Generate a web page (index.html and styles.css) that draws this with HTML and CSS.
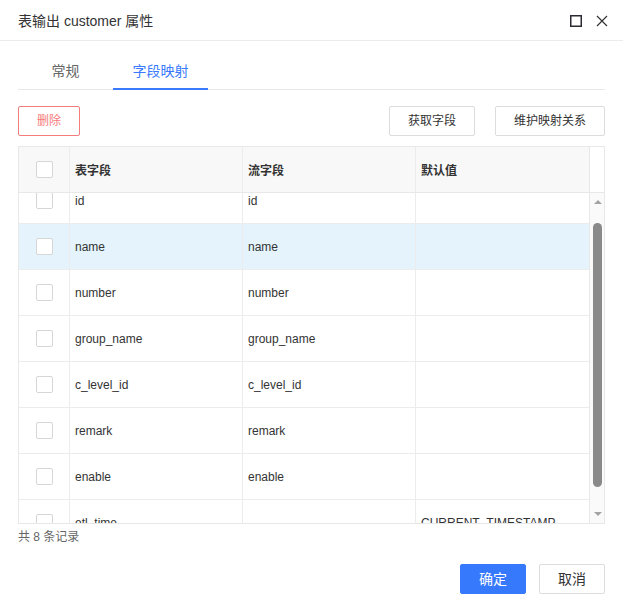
FILE: index.html
```html
<!DOCTYPE html>
<html lang="zh-CN">
<head>
<meta charset="utf-8">
<title>表输出 customer 属性</title>
<link rel="stylesheet" href="styles.css">
</head>
<body>
<div class="dialog">
  <div class="dlg-head">
    <div class="dlg-title">表输出 customer 属性</div>
    <div class="dlg-tools">
      <svg class="tool" width="12" height="12" viewBox="0 0 12 12"><rect x="0.75" y="0.75" width="10.5" height="10.5" fill="none" stroke="#2b2b33" stroke-width="1.5"/></svg>
      <svg class="tool" width="12" height="12" viewBox="0 0 12 12"><path d="M1 1 L11 11 M11 1 L1 11" stroke="#333" stroke-width="1.2" fill="none"/></svg>
    </div>
  </div>

  <div class="tabs">
    <div class="tab">常规</div>
    <div class="tab active">字段映射</div>
  </div>

  <div class="toolbar">
    <button class="btn btn-danger">删除</button>
    <div class="toolbar-right">
      <button class="btn">获取字段</button>
      <button class="btn">维护映射关系</button>
    </div>
  </div>

  <div class="table">
    <div class="thead">
      <div class="cell c-check"><span class="checkbox"></span></div>
      <div class="cell c-col">表字段</div>
      <div class="cell c-col">流字段</div>
      <div class="cell c-col last">默认值</div>
      <div class="gutter-head"></div>
    </div>
    <div class="tbody">
      <div class="viewport">
        <div class="rows">
          <div class="row">
            <div class="cell c-check"><span class="checkbox"></span></div>
            <div class="cell c-col">id</div>
            <div class="cell c-col">id</div>
            <div class="cell c-col last"></div>
          </div>
          <div class="row selected">
            <div class="cell c-check"><span class="checkbox"></span></div>
            <div class="cell c-col">name</div>
            <div class="cell c-col">name</div>
            <div class="cell c-col last"></div>
          </div>
          <div class="row">
            <div class="cell c-check"><span class="checkbox"></span></div>
            <div class="cell c-col">number</div>
            <div class="cell c-col">number</div>
            <div class="cell c-col last"></div>
          </div>
          <div class="row">
            <div class="cell c-check"><span class="checkbox"></span></div>
            <div class="cell c-col">group_name</div>
            <div class="cell c-col">group_name</div>
            <div class="cell c-col last"></div>
          </div>
          <div class="row">
            <div class="cell c-check"><span class="checkbox"></span></div>
            <div class="cell c-col">c_level_id</div>
            <div class="cell c-col">c_level_id</div>
            <div class="cell c-col last"></div>
          </div>
          <div class="row">
            <div class="cell c-check"><span class="checkbox"></span></div>
            <div class="cell c-col">remark</div>
            <div class="cell c-col">remark</div>
            <div class="cell c-col last"></div>
          </div>
          <div class="row">
            <div class="cell c-check"><span class="checkbox"></span></div>
            <div class="cell c-col">enable</div>
            <div class="cell c-col">enable</div>
            <div class="cell c-col last"></div>
          </div>
          <div class="row">
            <div class="cell c-check"><span class="checkbox"></span></div>
            <div class="cell c-col">etl_time</div>
            <div class="cell c-col"></div>
            <div class="cell c-col last">CURRENT_TIMESTAMP</div>
          </div>
        </div>
      </div>
      <div class="scrollbar">
        <div class="sb-btn"><span class="arrow-up"></span></div>
        <div class="sb-track"><div class="sb-thumb"></div></div>
        <div class="sb-btn"><span class="arrow-down"></span></div>
      </div>
    </div>
  </div>

  <div class="total">共 8 条记录</div>

  <div class="actions">
    <button class="btn btn-lg btn-primary">确定</button>
    <button class="btn btn-lg">取消</button>
  </div>
</div>
</body>
</html>
```

FILE: styles.css
```css
* { box-sizing: border-box; margin: 0; padding: 0; }

body {
  width: 623px;
  height: 600px;
  overflow: hidden;
  background: #fff;
  color: #333;
  font-family: "Liberation Sans", "Noto Sans CJK SC", Arial, sans-serif;
  font-size: 12px;
}

.dialog {
  display: flex;
  flex-direction: column;
  height: 600px;
}

.dlg-head {
  height: 41px;
  border-bottom: 1px solid #ececec;
  display: flex;
  align-items: center;
  justify-content: space-between;
  padding: 0 15px 0 18px;
}

.dlg-title {
  font-size: 14px;
  color: #333;
}

.dlg-tools {
  display: flex;
  align-items: center;
  gap: 14px;
  margin-top: 2px;
}

.tool { display: block; }

.tabs {
  display: flex;
  margin: 12px 18px 0;
  border-bottom: 1px solid #e8e8e8;
}

.tab {
  position: relative;
  width: 95px;
  height: 36px;
  line-height: 36px;
  text-align: center;
  font-size: 14px;
  color: #666;
}

.tab.active { color: #3a7afe; }

.tab.active::after {
  content: "";
  position: absolute;
  left: 0;
  right: 0;
  bottom: -1px;
  height: 2px;
  background: #3a7afe;
}

.toolbar {
  display: flex;
  justify-content: space-between;
  margin: 16px 18px 0;
}

.toolbar-right {
  display: flex;
  gap: 20px;
}

.btn {
  height: 30px;
  padding: 0 18px;
  border: 1px solid #dcdcdc;
  border-radius: 2px;
  background: #fff;
  color: #333;
  font-family: inherit;
  font-size: 12px;
  line-height: 28px;
}

.btn-danger {
  width: 62px;
  padding: 0;
  border-color: #f47c7c;
  color: #f77a7a;
}

.btn-lg {
  width: 66px;
  padding: 0;
  font-size: 14px;
}

.btn-primary {
  background: #3779fd;
  border-color: #3779fd;
  color: #fff;
}

.table {
  margin: 10px 18px 0;
  height: 378px;
  border: 1px solid #e8e8e8;
  display: flex;
  flex-direction: column;
}

.thead {
  display: flex;
  height: 46px;
  flex: none;
  border-bottom: 1px solid #e8e8e8;
  background: #f8f8f8;
  font-weight: bold;
}

.gutter-head {
  width: 15px;
  border-left: 1px solid #e8e8e8;
  background: #fff;
}

.tbody {
  flex: 1;
  display: flex;
  min-height: 0;
}

.viewport {
  width: 570px;
  overflow: hidden;
}

.rows {
  margin-top: -15px;
}

.row {
  display: flex;
  height: 46px;
  border-bottom: 1px solid #ececec;
}

.row.selected { background: #e4f3fc; }

.cell {
  display: flex;
  align-items: center;
  border-right: 1px solid #ececec;
  padding-left: 5px;
  white-space: nowrap;
}

.c-check {
  width: 51px;
  justify-content: center;
  padding: 0;
}

.c-col { width: 173px; }

.cell.last { border-right: none; }

.checkbox {
  display: block;
  width: 17px;
  height: 17px;
  border: 1px solid #d6d6d6;
  border-radius: 2px;
  background: #fff;
}

.scrollbar {
  width: 15px;
  border-left: 1px solid #e8e8e8;
  background: #fafafa;
  display: flex;
  flex-direction: column;
}

.sb-btn {
  height: 18px;
  flex: none;
  display: flex;
  align-items: center;
  justify-content: center;
}

.arrow-up {
  width: 0;
  height: 0;
  border-left: 4px solid transparent;
  border-right: 4px solid transparent;
  border-bottom: 4px solid #a3a3a3;
  margin-left: 1px;
}

.arrow-down {
  width: 0;
  height: 0;
  border-left: 4px solid transparent;
  border-right: 4px solid transparent;
  border-top: 4px solid #a3a3a3;
  margin-left: 1px;
}

.sb-track {
  flex: 1;
}

.sb-thumb {
  margin: 12px 0 0 3px;
  width: 9px;
  height: 264px;
  border-radius: 5px;
  background: #8a8a8a;
}

.total {
  margin: 5px 18px 0;
  line-height: 16px;
  color: #666;
}

.actions {
  display: flex;
  justify-content: flex-end;
  gap: 13px;
  margin: 19px 18px 0;
}
```
